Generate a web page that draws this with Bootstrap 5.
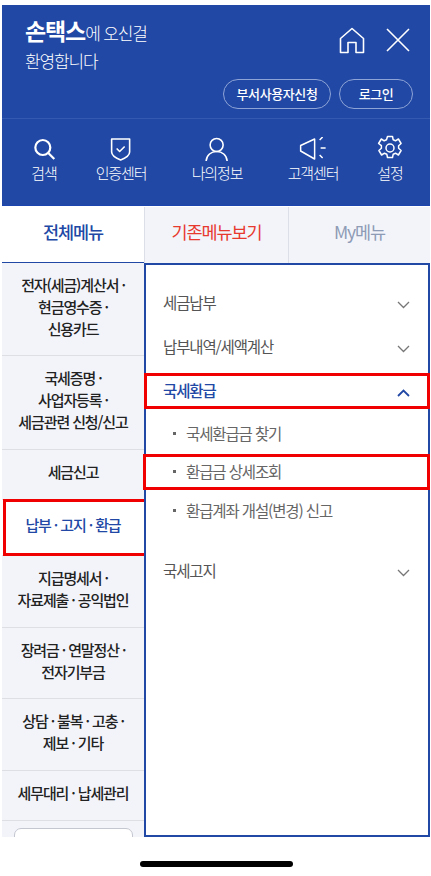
<!DOCTYPE html>
<html lang="ko">
<head>
  <meta charset="UTF-8" />
  <meta name="viewport" content="width=device-width, initial-scale=1" />
  <title>손택스 전체메뉴</title>
  <link href="https://cdn.jsdelivr.net/npm/bootstrap@5.3.3/dist/css/bootstrap.min.css" rel="stylesheet" />
  <style>
  html, body { height: 876px; overflow: hidden; background: #fff; }
  body { font-family: "Noto Sans CJK KR", "Noto Sans", sans-serif; letter-spacing: -0.07em; }
  .screen { width: 431px; height: 876px; padding: 5px 1px 0 2px; }

  .top-blue { background: #2148a5; height: 201px; color: #fff; border-bottom: 1px solid #1c45b0; }
  .welcome-row { height: 114px; border-bottom: 1px solid #3459b1; padding: 12px 17px 0 23px; }
  .welcome-text { font-size: 17px; line-height: 27.500px; font-weight: 300; }
  .welcome-text b { font-size: 23px; font-weight: 700; }
  .top-icons { gap: 20px; padding: 10px 2px 0 0; }
  .pill-row { margin-top: 25px; }
  .pill-btn { height: 30px; border: 1px solid #8ea4d6; border-radius: 15px; color: #fff; font-size: 13px; font-weight: 500; padding: 0; background: transparent; letter-spacing: -0.03em; }
  .pill-wide { width: 108px; }
  .pill-short { width: 74px; }
  .quick-row { height: 86px; position: relative; }
  .quick-item { position: absolute; top: 18px; transform: translateX(-50%); text-align: center; font-size: 15px; font-weight: 300; line-height: 20px; white-space: nowrap; }
  .quick-item svg { display: block; margin: 0 auto 2px; }
  .quick-item .gear-icon { margin-top: -2px; }

  .tab-row { height: 57px; }
  .tab-item { display: flex; align-items: center; justify-content: center; font-size: 17.500px; font-weight: 500; background: #f2f4fa; border-left: 1px solid #dcdfe8; height: 56px; margin-top: 1px; padding-bottom: 5px; }
  .tab-all { width: 142px; background: #fff; color: #2148a5; border-left: 0; border-bottom: 2px solid #2148a5; height: 57px; }
  .tab-old { width: 144px; color: #e8392f; font-weight: 400; }
  .tab-my { width: 142px; color: #8e9bb5; font-weight: 400; }

  .menu-body { height: 574px; overflow: hidden; }
  .side-list { width: 142px; background: #f2f4fa; flex: none; overflow: hidden; }
  .side-item { position: relative; display: flex; align-items: center; justify-content: center; text-align: center; font-size: 15px; line-height: 22px; font-weight: 500; color: #222; border-bottom: 1px solid #dddfe5; padding: 0 0 5px; white-space: nowrap; }
  .side-item.on { background: #fff; color: #2148a5; }
  .side-more { height: 30px; margin: 7px 11px 0 12px; background: #fff; border: 1px solid #c4c7d0; border-radius: 7px 7px 0 0; }

  .sub-panel { flex: 1; border: 2px solid #2148a5; background: #fff; padding-top: 16px; }
  .sub-head { position: relative; display: flex; align-items: center; justify-content: space-between; height: 44px; padding: 0 18px 0 17px; font-size: 15.500px; color: #555; }
  .sub-head svg { margin-top: 4px; }
  .sub-head.open { color: #2148a5; font-weight: 500; height: 36px; margin: 4px 0 5px; }
  .sub-link { position: relative; height: 38.500px; display: flex; align-items: center; padding-left: 27px; font-size: 15.500px; color: #666; }
  .sub-link::before { content: ""; width: 3px; height: 3px; background: #666; margin-right: 10px; }
  .red-box { position: absolute; border: 3px solid #f00000; pointer-events: none; }

  .home-strip { height: 39px; background: #fff; }
  .home-bar { width: 153px; height: 6px; border-radius: 3px; background: #000; margin: 24px 0 0 138px; }
  </style>
</head>
<body>
<div class="screen">

  <!-- Header -->
  <div class="top-blue">
    <div class="welcome-row d-flex justify-content-between">
      <div class="welcome-text">
        <div><b>손택스</b>에 오신걸</div>
        <div>환영합니다</div>
      </div>
      <div class="d-flex flex-column align-items-end">
        <div class="d-flex top-icons">
          <svg width="26" height="27" viewBox="0 0 26 27" fill="none" stroke="#fff" stroke-width="1.600" stroke-linejoin="round"><path d="M1.500 11.500 13 1.500l11.500 10V25.500h-7.500V15.500H9V25.500H1.500Z"/></svg>
          <svg width="26" height="26" viewBox="0 0 26 26" fill="none" stroke="#fff" stroke-width="1.600"><path d="M2 2l22 22M24 2 2 24"/></svg>
        </div>
        <div class="d-flex gap-2 pill-row">
          <button type="button" class="btn pill-btn pill-wide">부서사용자신청</button>
          <button type="button" class="btn pill-btn pill-short">로그인</button>
        </div>
      </div>
    </div>
    <div class="quick-row">
      <div class="quick-item" style="left:42px">
        <svg width="24" height="24" viewBox="0 0 24 24" fill="none" stroke="#fff" stroke-width="2.200"><circle cx="10.500" cy="10.500" r="7.500"/><path d="M16 16l6 6"/></svg>검색
      </div>
      <div class="quick-item" style="left:119px">
        <svg width="24" height="24" viewBox="0 0 24 24" fill="none" stroke="#fff" stroke-width="1.600" stroke-linejoin="round"><path d="M3 2h18v13c0 3-4 6-9 8-5-2-9-5-9-8Z"/><path d="M8 11.500l3 3 5-5"/></svg>인증센터
      </div>
      <div class="quick-item" style="left:215px">
        <svg width="24" height="24" viewBox="0 0 24 24" fill="none" stroke="#fff" stroke-width="1.600"><circle cx="12" cy="8" r="6.500"/><path d="M1.500 24c.5-6 5-9.500 10.500-9.500S22 18 22.500 24"/></svg>나의정보
      </div>
      <div class="quick-item" style="left:311px">
        <svg width="28" height="24" viewBox="0 0 28 24" fill="none" stroke="#fff" stroke-width="1.500" stroke-linejoin="round"><path d="M2 8.500 16 2v20L2 14Z"/><path d="M21 3l3-3M22 11h5M21 18l3 3"/></svg>고객센터
      </div>
      <div class="quick-item" style="left:388px">
        <svg class="gear-icon" width="26" height="26" viewBox="0 0 26 26" fill="none" stroke="#fff" stroke-width="1.500" stroke-linejoin="round"><circle cx="13" cy="13" r="4"/><path d="M10.500 1.500h5l.7 3.300 2.300 1 2.900-1.800 2.700 4.500-2.500 2.200v2.600l2.500 2.200-2.700 4.500-2.900-1.800-2.300 1-.7 3.300h-5l-.7-3.300-2.300-1-2.900 1.800-2.700-4.500 2.500-2.200v-2.600L1.600 8.500l2.700-4.500 2.900 1.800 2.300-1Z"/></svg>설정
      </div>
    </div>
  </div>

  <!-- Tabs -->
  <div class="tab-row d-flex">
    <div class="tab-item tab-all">전체메뉴</div>
    <div class="tab-item tab-old">기존메뉴보기</div>
    <div class="tab-item tab-my">My메뉴</div>
  </div>

  <!-- Menu -->
  <div class="menu-body d-flex">
    <div class="side-list">
      <div class="side-item" style="height:93px">전자(세금)계산서 ·<br>현금영수증 ·<br>신용카드</div>
      <div class="side-item" style="height:94px">국세증명 ·<br>사업자등록 ·<br>세금관련 신청/신고</div>
      <div class="side-item" style="height:50px">세금신고</div>
      <div class="side-item on" style="height:56px">납부 · 고지 · 환급
        <span class="red-box" style="left:1px;right:-3px;top:-1px;bottom:-1px"></span>
      </div>
      <div class="side-item" style="height:72px">지급명세서 ·<br>자료제출 · 공익법인</div>
      <div class="side-item" style="height:71px">장려금 · 연말정산 ·<br>전자기부금</div>
      <div class="side-item" style="height:72px">상담 · 불복 · 고충 ·<br>제보 · 기타</div>
      <div class="side-item" style="height:50px">세무대리 · 납세관리</div>
      <div class="side-more"></div>
    </div>

    <div class="sub-panel">
      <div class="sub-head">세금납부
        <svg width="13" height="8" viewBox="0 0 13 8" fill="none" stroke="#777" stroke-width="1.300"><path d="M1 1l5.500 5.500L12 1"/></svg>
      </div>
      <div class="sub-head">납부내역/세액계산
        <svg width="13" height="8" viewBox="0 0 13 8" fill="none" stroke="#777" stroke-width="1.300"><path d="M1 1l5.500 5.500L12 1"/></svg>
      </div>
      <div class="sub-head open">국세환급
        <svg width="13" height="8" viewBox="0 0 13 8" fill="none" stroke="#2148a5" stroke-width="1.800"><path d="M1 7l5.500-5.500L12 7"/></svg>
        <span class="red-box" style="left:-2px;right:-2px;top:0;bottom:0"></span>
      </div>
      <div class="sub-link">국세환급금 찾기</div>
      <div class="sub-link">환급금 상세조회
        <span class="red-box" style="left:-3px;right:-2px;top:1px;bottom:1px"></span>
      </div>
      <div class="sub-link">환급계좌 개설(변경) 신고</div>
      <div class="sub-head" style="margin-top:19px">국세고지
        <svg width="13" height="8" viewBox="0 0 13 8" fill="none" stroke="#777" stroke-width="1.300"><path d="M1 1l5.500 5.500L12 1"/></svg>
      </div>
    </div>
  </div>

  <div class="home-strip"><div class="home-bar"></div></div>
</div>
<script src="https://cdn.jsdelivr.net/npm/bootstrap@5.3.3/dist/js/bootstrap.bundle.min.js"></script>
</body>
</html>
